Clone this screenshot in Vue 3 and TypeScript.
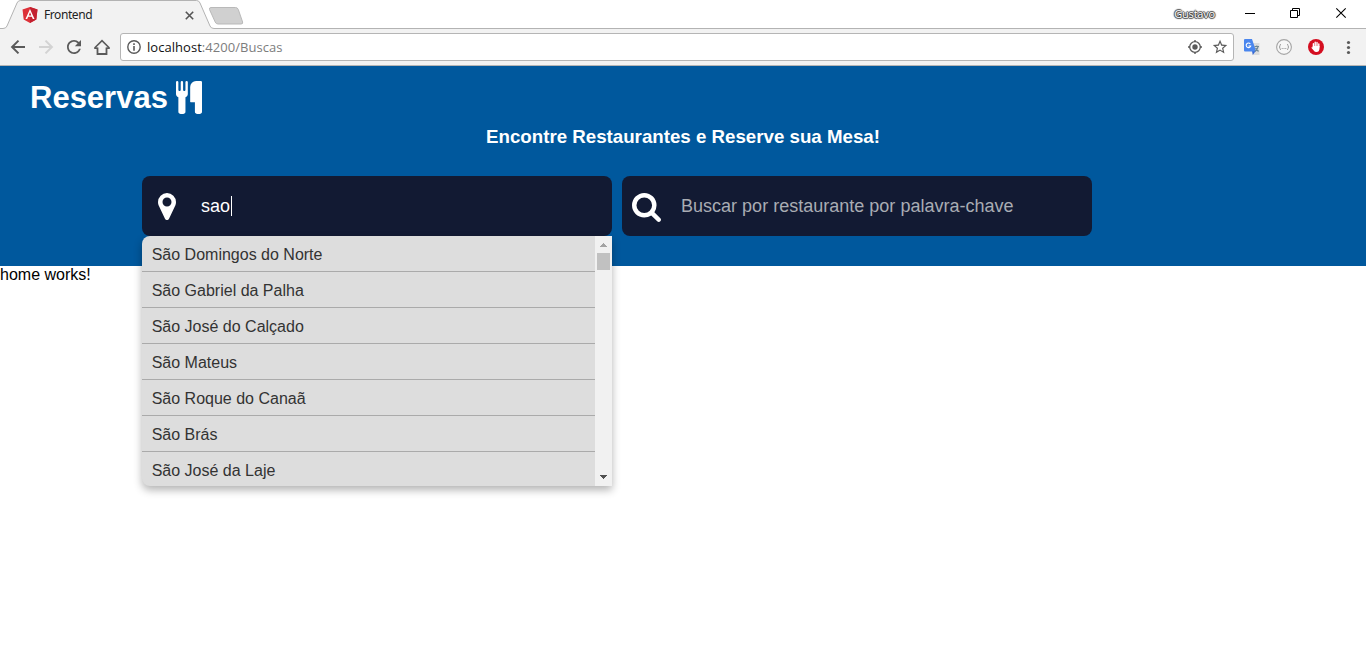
<script setup lang="ts">
import { ref } from 'vue'

const city = ref<string>('sao')
const cities: string[] = [
  'São Domingos do Norte',
  'São Gabriel da Palha',
  'São José do Calçado',
  'São Mateus',
  'São Roque do Canaã',
  'São Brás',
  'São José da Laje',
]
</script>

<template>
  <div class="window">
    <div class="tabstrip">
      <svg class="tab-shape" width="1366" height="29" viewBox="0 0 1366 29">
        <path d="M0 29V28.5H3Q6 28.5 7 26L17 3Q18 .5 20.500 .5H196.500Q199 .5 200 3L210 26Q211 28.500 214 28.500H1366V29Z" fill="#f2f2f2" />
        <path d="M0 28.500H3Q6 28.500 7 26L17 3Q18 .5 20.500 .5H196.500Q199 .5 200 3L210 26Q211 28.500 214 28.500H1366" fill="none" stroke="#b3b3b3" />
        <path d="M211 7.500H235.500Q237.500 7.500 238.300 9.500L242.600 22Q243.200 24 241 24H218Q216 24 215.200 22L209.500 9.500Q209 7.500 211 7.500Z" fill="#d0d0d0" stroke="#b9b9b9" />
      </svg>
      <div class="tab">
        <svg width="16" height="16" viewBox="0 0 16 16">
          <path d="M8 0L15.500 2.600L14.300 12.500L8 16L1.700 12.500L.5 2.600Z" fill="#dd3138" />
          <path d="M8 0L15.500 2.600L14.300 12.500L8 16Z" fill="#c3202f" />
          <path d="M8 2L12.500 12H10.800L9.900 9.800H6.100L5.200 12H3.500ZM8 5.200L6.700 8.400H9.300Z" fill="#fff" fill-rule="evenodd" />
        </svg>
        <span class="tab-title">Frontend</span>
        <svg class="tab-close" width="9" height="9" viewBox="0 0 9 9"><path d="M.8 .8L8.200 8.200M8.200 .8L.8 8.200" stroke="#555" stroke-width="1.600" /></svg>
      </div>
      <div class="controls">
        <span class="profile">Gustavo</span>
        <svg width="112" height="16" viewBox="1240 5 112 16" fill="none" stroke="#000">
          <path d="M1245 13.500H1255" />
          <path d="M1290.500 10.500H1297.500V17.500H1290.500ZM1292.500 10V8.500H1299.500V15.500H1298" />
          <path d="M1336.300 8.300L1345.700 17.700M1345.700 8.300L1336.300 17.700" stroke-width="1.100" />
        </svg>
      </div>
    </div>

    <div class="toolbar">
      <svg class="nav" width="102" height="22" viewBox="10 36 102 22" fill="none" stroke="#5a5a5a" stroke-width="2">
        <path d="M25 47H12.500M18.500 40.600L12.100 47L18.500 53.400" />
        <path d="M39 47H51.500M45.500 40.600L51.900 47L45.500 53.400" stroke="#d3d3d3" />
        <path transform="translate(63.500 36.500) scale(.875)" fill="#5a5a5a" stroke="none" d="M17.650 6.350C16.200 4.900 14.210 4 12 4c-4.420 0-7.990 3.580-7.990 8s3.570 8 7.990 8c3.730 0 6.840-2.550 7.730-6h-2.080c-.82 2.330-3.040 4-5.650 4-3.310 0-6-2.690-6-6s2.690-6 6-6c1.660 0 3.140.69 4.220 1.780L13 11h7V4l-2.350 2.350z" />
        <path d="M97.500 47.500V54H106.500V47.500" stroke-width="1.800" />
        <path d="M94.200 48.200H97.500M106.500 48.200H109.800M94.600 48L102 40.600L109.400 48" stroke-width="1.600" />
      </svg>
      <div class="omnibox">
        <svg width="14" height="14" viewBox="0 0 14 14"><circle cx="7" cy="7" r="6.200" fill="none" stroke="#5a5a5a" stroke-width="1.400" /><path d="M6.200 3.300H7.800V4.900H6.200ZM6.200 6H7.800V10.700H6.200Z" fill="#5a5a5a" /></svg>
        <span class="url">localhost<span class="path">:4200/Buscas</span></span>
        <svg class="end" width="42" height="18" viewBox="1187 38 42 18">
          <circle cx="1195" cy="47" r="5.300" fill="none" stroke="#5a5a5a" stroke-width="1.300" />
          <circle cx="1195" cy="47" r="2.700" fill="#5a5a5a" />
          <path d="M1195 40V42M1195 52V54M1188 47H1190M1200 47H1202" stroke="#5a5a5a" stroke-width="1.400" />
          <path transform="translate(1211.400 38.400) scale(.72)" fill="#5a5a5a" d="M22 9.240l-7.190-.62L12 2 9.190 8.630 2 9.240l5.460 4.730L5.820 21 12 17.270 18.180 21l-1.630-7.030L22 9.240zM12 15.400l-3.760 2.270 1-4.280-3.320-2.880 4.380-.38L12 6.100l1.710 4.040 4.380.38-3.320 2.880 1 4.280L12 15.400z" />
        </svg>
      </div>
      <svg class="extensions" width="114" height="22" viewBox="1240 36 114 22">
        <path d="M1250 43H1259.500V55H1252.500Z" fill="#dcdcdc" />
        <path d="M1252 50.500H1256L1252.800 55Z" fill="#3367d6" />
        <path d="M1245 39H1252L1256.200 51.500H1245Q1244 51.500 1244 50.500V40Q1244 39 1245 39Z" fill="#4a86ee" />
        <path d="M1250.300 43.900A2.300 2.300 0 1 0 1250.700 46H1248.500" fill="none" stroke="#fff" stroke-width="1.100" />
        <path d="M1254.500 46.500H1259M1256.800 45.500V46.500M1258 47Q1257 50.500 1254.800 51.500M1255.500 48L1258.500 51.500" fill="none" stroke="#6d8797" stroke-width="1.200" />
        <circle cx="1284" cy="47" r="7.400" fill="#f7f7f7" stroke="#a5a5a5" stroke-width="1.100" />
        <path d="M1281 44.300Q1280 44.300 1280 45.500Q1280 47 1279 47Q1280 47 1280 48.500Q1280 49.700 1281 49.700M1287 44.300Q1288 44.300 1288 45.500Q1288 47 1289 47Q1288 47 1288 48.500Q1288 49.700 1287 49.700M1281.700 48.500H1282.700M1283.500 48.500H1284.500M1285.300 48.500H1286.300" fill="none" stroke="#8f8f8f" stroke-width=".9" />
        <circle cx="1316" cy="47" r="8" fill="#d40e20" />
        <path d="M1313.400 47V43.700M1315.200 46V42.200M1317 46V42.500M1318.800 47V43.900" stroke="#fff" stroke-width="1.400" stroke-linecap="round" />
        <path d="M1312.700 46H1319.500V48.500Q1319.300 52 1316.500 52Q1314.700 52 1313.700 50.500L1311.300 47.800Q1311.500 46.800 1312.700 47.300Z" fill="#fff" />
        <g fill="#5a5a5a"><circle cx="1348.500" cy="42.500" r="1.600" /><circle cx="1348.500" cy="47.500" r="1.600" /><circle cx="1348.500" cy="52.500" r="1.600" /></g>
      </svg>
    </div>

    <header class="hero">
      <div class="brand">
        <h1>Reservas</h1>
        <svg width="26" height="33" viewBox="0 64 1408 1792" preserveAspectRatio="none" fill="#fff">
          <path d="M640 128v640q0 61-35.500 111t-92.500 70v779q0 52-38 90t-90 38h-128q-52 0-90-38t-38-90v-779q-57-20-92.500-70t-35.500-111v-640q0-26 19-45t45-19 45 19 19 45v416q0 26 19 45t45 19 45-19 19-45v-416q0-26 19-45t45-19 45 19 19 45v416q0 26 19 45t45 19 45-19 19-45v-416q0-26 19-45t45-19 45 19 19 45zm768 0v1600q0 52-38 90t-90 38h-128q-52 0-90-38t-38-90v-512h-224q-13 0-22.500-9.500t-9.500-22.500v-800q0-132 94-226t226-94h256q26 0 45 19t19 45z" />
        </svg>
      </div>
      <h2><span>Encontre Restaurantes e Reserve sua Mesa!</span></h2>
      <div class="searches">
        <div class="field">
          <svg class="pin" width="18" height="27" viewBox="0 128 1024 1536" fill="#fff"><path d="M768 640q0-106-75-181t-181-75-181 75-75 181 75 181 181 75 181-75 75-181zm256 0q0 109-33 179l-364 774q-16 33-47.500 52t-67.500 19-67.500-19-46.500-52l-365-774q-33-70-33-179 0-212 150-362t362-150 362 150 150 362z" /></svg>
          <span class="typed">{{ city }}</span><i class="caret"></i>
          <div class="dropdown">
            <ul><li v-for="name in cities" :key="name"><span>{{ name }}</span></li></ul>
            <div class="scrollbar">
              <svg width="17" height="17" viewBox="0 0 17 17" shape-rendering="crispEdges"><path d="M8 7H9V8H10V9H11V10H12V11H5V10H6V9H7V8H8Z" fill="#a3a3a3" /></svg>
              <div class="thumb"></div>
              <svg class="down" width="17" height="17" viewBox="0 0 17 17" shape-rendering="crispEdges"><path d="M5 6H12V7H11V8H10V9H9V10H8V9H7V8H6V7H5Z" fill="#505050" /></svg>
            </div>
          </div>
        </div>
        <div class="field">
          <svg class="glass" width="29" height="29" viewBox="64 128 1664 1664" fill="#fff"><path d="M1216 832q0-185-131.500-316.500t-316.500-131.500-316.500 131.500-131.500 316.500 131.500 316.500 316.500 131.500 316.500-131.500 131.500-316.500zm512 832q0 52-38 90t-90 38q-54 0-90-38l-343-342q-179 124-399 124-143 0-273.500-55.500t-225-150-150-225-55.500-273.500 55.500-273.500 150-225 225-150 273.500-55.500 273.500 55.500 225 150 150 225 55.500 273.500q0 220-124 399l343 343q37 37 37 90z" /></svg>
          <span class="placeholder">Buscar por restaurante por palavra-chave</span>
        </div>
      </div>
    </header>
    <p class="home">home works!</p>
  </div>
</template>

<style>
html, body { margin: 0; background: #fff; overflow: hidden; }
</style>

<style scoped>
.window { width: 1366px; height: 649px; overflow: hidden; font-family: "Liberation Sans", Arial, sans-serif; }
svg { display: block; flex: none; }
.tabstrip { position: relative; height: 29px; display: flex; justify-content: space-between; }
.tab-shape { position: absolute; left: 0; top: 0; }
.tab { position: relative; display: flex; align-items: center; width: 194px; height: 30px; padding-left: 22px; box-sizing: border-box; font-family: "Noto Sans", "Open Sans", sans-serif; }
.tab-title { font-size: 12px; line-height: 18px; margin: 0 0 0 6px; color: #222; letter-spacing: -0.42px; }
.tab-close { margin-left: auto; }
.controls { position: relative; display: flex; align-items: flex-start; padding: 5px 14px 0 0; }
.profile { font-family: "Open Sans", sans-serif; font-size: 11px; line-height: 18px; color: #fff; letter-spacing: -0.2px; margin-right: 25px; text-shadow: 1px 0 1px #333, -1px 0 1px #333, 0 1px 1px #333, 0 -1px 1px #333; }
.toolbar { height: 37px; box-sizing: border-box; background: #f2f2f2; border-bottom: 1px solid #b5b5b5; display: flex; align-items: center; padding-left: 10px; }
.omnibox { width: 1114px; height: 28px; box-sizing: border-box; border: 1px solid #b5b5b5; border-radius: 3px; background: #fff; margin-left: 8px; display: flex; align-items: center; padding: 0 4px 0 6px; }
.url { font-family: "Open Sans", sans-serif; font-size: 13px; line-height: 18px; margin-left: 6px; color: #111; white-space: nowrap; letter-spacing: 0.04px; }
.path { color: #7c7c7c; }
.end { margin-left: auto; }
.extensions { margin-left: 6px; }
.hero { height: 200px; box-sizing: border-box; background: #00589d; padding-top: 13px; color: #fff; }
.brand { display: flex; align-items: center; height: 37px; padding-left: 30px; }
h1 { margin: 0; width: 146px; font-size: 31px; line-height: 37px; }
h2 { margin: 9px 0 0; text-align: center; font-size: 18.72px; line-height: 24px; white-space: nowrap; }
.searches { display: flex; gap: 10px; padding-left: 142px; margin-top: 27px; }
.field { position: relative; width: 470px; height: 60px; border-radius: 8px; background: #121a33; display: flex; align-items: center; font-size: 18px; box-sizing: border-box; }
.pin { margin-left: 16px; }
.glass { margin: 2px 0 0 10px; }
.typed { margin-left: 25px; }
.caret { width: 1px; height: 20px; margin-left: 1px; background: #fff; }
.placeholder { margin-left: 20px; color: #a9acb3; white-space: nowrap; letter-spacing: 0.01px; }
.dropdown { position: absolute; z-index: 2; left: 0; top: 60px; width: 470px; height: 250px; display: flex; background: #ddd; border-radius: 8px 0 0 8px; box-shadow: 0 4px 8px rgba(0, 0, 0, .3); font-size: 16px; }
ul { flex: 1; margin: 0; padding: 0; list-style: none; }
li { height: 36px; box-sizing: border-box; border-bottom: 1px solid #aaa; padding-left: 9.7px; color: #333; line-height: 38px; }
li:last-child { border-bottom: 0; height: 34px; }
.scrollbar { width: 17px; background: #f1f1f1; display: flex; flex-direction: column; }
.thumb { width: 13px; height: 17px; margin-left: 2px; background: #c1c1c1; }
.down { margin-top: auto; }
.home { margin: 0; font-size: 16px; line-height: 18px; color: #000; }
</style>
